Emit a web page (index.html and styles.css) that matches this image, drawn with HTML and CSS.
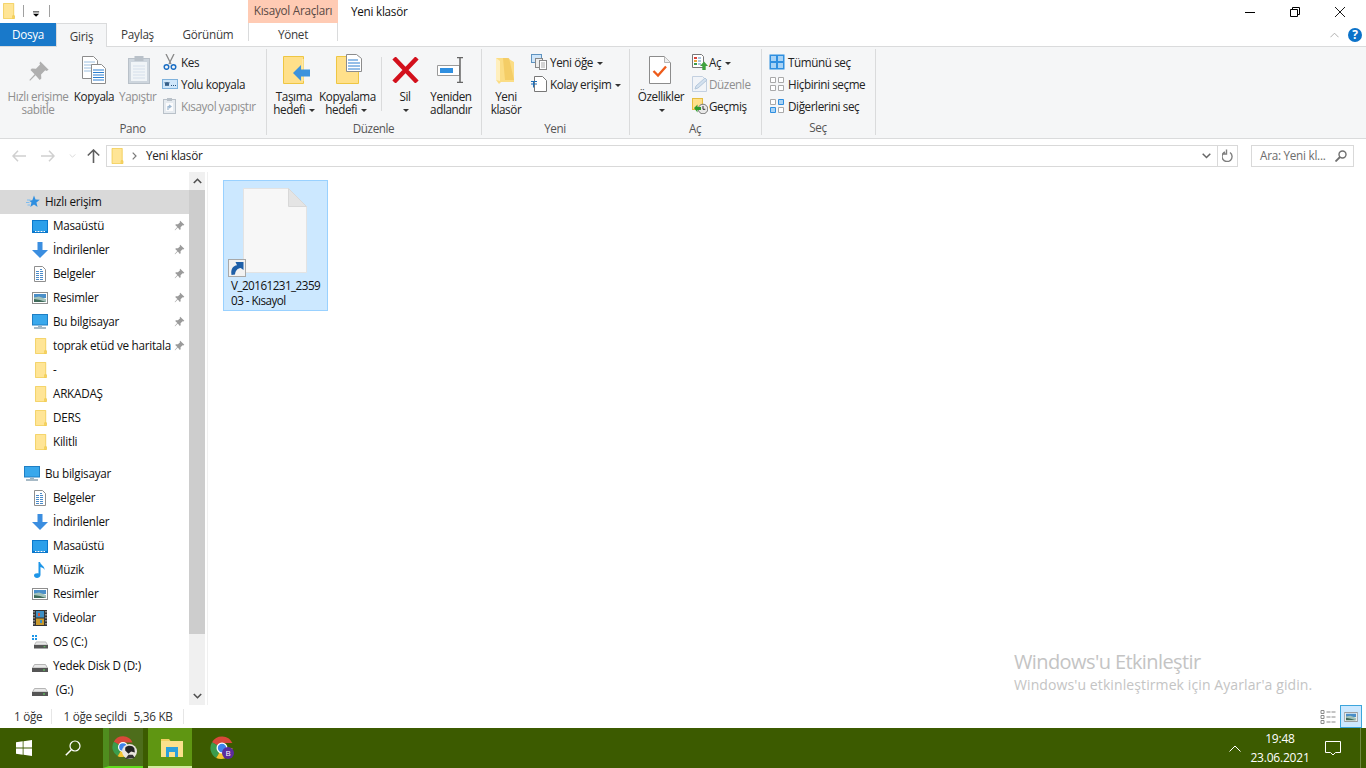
FILE: index.html
```html
<!DOCTYPE html>
<html lang="tr">
<head>
<meta charset="utf-8">
<title>Yeni klasör</title>
<link rel="stylesheet" href="styles.css">
</head>
<body>
<svg class="defs" width="0" height="0" aria-hidden="true">
  <defs>
    <symbol id="folder" viewBox="0 0 16 22">
      <path d="M.5.5h14v17h1v4H.5z" fill="#ffe596" stroke="#eec643"/>
      <path d="M13 21.5v-4h1.500v4z" fill="#ffe596" stroke="#eec643"/>
    </symbol>
    <symbol id="pin" viewBox="0 0 16 16">
      <path d="M9 1l6 6-1.500 1-1-.5-3 3 .2 3-1.200 1L5.500 11 1.500 15 1 14.500 4.800 10.300 1.800 7.300l1-1.200 3 .2 3-3-.5-1z" fill="#8a8a8a"/>
    </symbol>
    <symbol id="desktop" viewBox="0 0 16 13">
      <rect width="16" height="13" fill="#0a78cc"/>
      <rect x="1" y="1" width="14" height="10" fill="#2b9fea"/>
      <path d="M3 11.500h10" stroke="#fff" stroke-dasharray="1 .5"/>
    </symbol>
    <symbol id="down" viewBox="0 0 16 16">
      <path d="M5.500 0h5v8H16l-8 8-8-8h5.500z" fill="#3b8ee0"/>
    </symbol>
    <symbol id="doc" viewBox="0 0 12 16">
      <path d="M.5.500h8l3 3v12H.5z" fill="#fff" stroke="#8f8f8f"/>
      <path d="M6 3.500h2M2 5.500h8M2 7.500h8M2 9.500h8M2 11.500h8M2 13.500h8" stroke="#4b8bc9" stroke-dasharray="3 1"/>
    </symbol>
    <symbol id="pic" viewBox="0 0 16 12">
      <rect x=".5" y=".5" width="15" height="11" fill="#fff" stroke="#8e8e8e"/>
      <rect x="2" y="2" width="12" height="4" fill="#4a8fc9"/>
      <path d="M2 5.500l5-1 7 2.500v3H2z" fill="#a3c2ba"/>
      <path d="M2 7l6 1 6 2H2z" fill="#3f6b5a"/>
    </symbol>
    <symbol id="pc" viewBox="0 0 16 16">
      <rect x=".5" y=".5" width="15" height="10.500" fill="#39a8ec" stroke="#1f7fc4"/>
      <path d="M6 11.500h4V13H6z" fill="#9ab4c6"/>
      <path d="M2 14h12" stroke="#8aa3b3" stroke-width="1.500"/>
    </symbol>
    <symbol id="star" viewBox="0 0 16 16">
      <path d="M10 1.500l1.500 4 4.300.3-3.400 2.800 1.200 4.400-3.600-2.400-3.700 2.400 1.200-4.400-2.300-1.900 3.100-.4z" fill="#2f8fe0"/>
      <path d="M3 6h3.500M2 8.500h3.500M3.500 11H6" stroke="#7dbcf0"/>
    </symbol>
    <symbol id="music" viewBox="0 0 12 16">
      <path d="M4.500 0H6c.5 3 5 4 4.500 8C10 6 8 5.500 6.500 5v8c0 2-2 3-3.500 3S0 15 0 13.500 2 11 4.500 11.500z" fill="#1e96e8"/>
    </symbol>
    <symbol id="film" viewBox="0 0 14 16">
      <rect width="14" height="16" fill="#333"/>
      <path d="M1 1v14M13 1v14" stroke="#ddd" stroke-dasharray="1.500 1.500"/>
      <rect x="3" y="1" width="8" height="6.500" fill="#3d8fc4"/>
      <rect x="3" y="8.500" width="8" height="6.500" fill="#c99a2e"/>
      <path d="M5 3h2v3H5z" fill="#d9553a"/>
      <path d="M7 10h2v3H7z" fill="#3d8fc4"/>
    </symbol>
    <symbol id="drive" viewBox="0 0 16 8">
      <path d="M2.500.5h11l2 3.500H.5z" fill="#e8e8e8" stroke="#b5b5b5"/>
      <rect y="4" width="16" height="4" fill="#555"/>
      <rect x="11" y="5.500" width="2" height="1" fill="#5fe05f"/>
    </symbol>
    <symbol id="chrome" viewBox="0 0 24 24">
      <path d="M12 12L2 6.200A11.500 11.500 0 0 1 22.400 7H12z" fill="#d8483a"/>
      <path d="M12 12l-5.800 10A11.500 11.500 0 0 1 2 6.200z" fill="#3b9c4d"/>
      <path d="M12 12h10.400A11.500 11.500 0 0 1 6.200 22z" fill="#f4c431"/>
      <circle cx="12" cy="12" r="5.500" fill="#fff"/>
      <circle cx="12" cy="12" r="4.200" fill="#3f83ea"/>
    </symbol>
  </defs>
</svg>

<div class="window">
  <header class="titlebar">
    <div class="qat">
      <svg class="ic qf"><use href="#folder"/></svg>
      <i class="qsep"></i>
      <svg class="qdrop" viewBox="0 0 8 8"><path d="M0 1h7" stroke="#000"/><path d="M0 3h7L3.500 6.500z" fill="#000"/></svg>
      <i class="qsep"></i>
    </div>
    <div class="ctx-head">Kısayol Araçları</div>
    <div class="wintitle">Yeni klasör</div>
    <div class="winbtns">
      <svg class="wb wb-min" viewBox="0 0 10 10"><path d="M0 5.500h10" stroke="#000"/></svg>
      <svg class="wb wb-max" viewBox="0 0 10 10"><path d="M.5 2.500h7v7h-7zM2.500 2.500v-2h7v7h-2" fill="none" stroke="#000"/></svg>
      <svg class="wb wb-close" viewBox="0 0 10 10"><path d="M0 0l10 10M10 0L0 10" stroke="#000" stroke-width=".9"/></svg>
    </div>
  </header>

  <nav class="tabs">
    <div class="tab tab-file">Dosya</div>
    <div class="tab tab-home">Giriş</div>
    <div class="tab tab-share">Paylaş</div>
    <div class="tab tab-view">Görünüm</div>
    <div class="tab tab-manage">Yönet</div>
    <div class="tabs-right">
      <svg class="collapse" viewBox="0 0 10 6"><path d="M.5 5.500L5 1l4.500 4.500" fill="none" stroke="#a8a8a8"/></svg>
      <div class="help">?</div>
    </div>
  </nav>

  <section class="ribbon">
    <div class="group g-pano">
      <div class="gbody">
        <div class="lg w-pin dis">
          <svg class="lgi i-pin" viewBox="0 0 16 16"><use href="#pin"/></svg>
          <span>Hızlı erişime<br>sabitle</span>
        </div>
        <div class="lg w-copy">
          <svg class="lgi i-copy" viewBox="0 0 24 28">
            <path d="M.5.500h11l4 4v18H.5z" fill="#fff" stroke="#8c8c8c"/>
            <path d="M2 6h11M2 9h11M2 12h11M2 15h11" stroke="#9cbfe0"/>
            <path d="M9.500 8.500h10l4 4v15h-14z" fill="#fff" stroke="#8c8c8c"/>
            <path d="M11 14h11M11 16.500h11M11 19h11M11 21.500h11M11 24h11" stroke="#2c7fd0"/>
          </svg>
          <span>Kopyala</span>
        </div>
        <div class="lg w-paste dis">
          <svg class="lgi i-paste" viewBox="0 0 22 29">
            <rect x=".5" y="3.500" width="21" height="25" fill="#b8c4d0" stroke="#9aa6b2"/>
            <rect x="3" y="7" width="16" height="19" fill="#eef3f8"/>
            <path d="M5 11h12M5 14h12M5 17h12M5 20h12M5 23h12" stroke="#c5d4e4"/>
            <rect x="6.500" y="1" width="9" height="5" fill="#9aa6b2"/>
          </svg>
          <span>Yapıştır</span>
        </div>
        <div class="smcol">
          <div class="sm">
            <svg class="smi" viewBox="0 0 14 16"><path d="M3 0l5 10M11 0L6 10" stroke="#888" stroke-width="1.300"/><circle cx="3.500" cy="13" r="2.300" fill="none" stroke="#1d6fc4" stroke-width="1.500"/><circle cx="10.500" cy="13" r="2.300" fill="none" stroke="#1d6fc4" stroke-width="1.500"/></svg>
            <span>Kes</span>
          </div>
          <div class="sm">
            <svg class="smi" viewBox="0 0 16 10"><rect x=".5" y=".5" width="15" height="9" fill="#cfe6fa" stroke="#7fb2dc"/><path d="M3 3l1 4 1-4 1 4 1-4M9 6.500h1M11 6.500h1M13 6.500h1" fill="none" stroke="#24507c"/></svg>
            <span>Yolu kopyala</span>
          </div>
          <div class="sm dis">
            <svg class="smi" viewBox="0 0 14 16"><rect x=".5" y="1.500" width="12" height="14" fill="#dfe6ed" stroke="#9aa6b2"/><rect x="4" y="0" width="5" height="3" fill="#9aa6b2"/><rect x="3" y="5" width="7" height="8" fill="#fff"/><path d="M5 12V8.500h3M6 7l2 1.500L6 10" fill="none" stroke="#6f97bf" stroke-width="1.200"/></svg>
            <span>Kısayol yapıştır</span>
          </div>
        </div>
      </div>
      <div class="glabel">Pano</div>
    </div>

    <div class="group g-duzenle">
      <div class="gbody">
        <div class="lg w-move">
          <svg class="lgi i-move" viewBox="0 0 27 28">
            <path d="M.5.500h20v27H.5z" fill="#ffe08a" stroke="#eec643"/>
            <path d="M20 25V3" stroke="#fff3c4"/>
            <path d="M10 17l8-8v4.500h9v7h-9V25z" fill="#3d93dd"/>
          </svg>
          <span>Taşıma<br>hedefi <b class="car"></b></span>
        </div>
        <div class="lg w-copyto">
          <svg class="lgi i-copyto" viewBox="0 0 27 30">
            <path d="M.5 2.500h22v27H.5z" fill="#ffe08a" stroke="#eec643"/>
            <path d="M10.500.500h10l5 4v13h-15z" fill="#fff" stroke="#8c8c8c"/>
            <path d="M12 6h10M12 9h12M12 12h12M12 15h12" stroke="#2c7fd0"/>
          </svg>
          <span>Kopyalama<br>hedefi <b class="car"></b></span>
        </div>
        <i class="isep"></i>
        <div class="lg w-del">
          <svg class="lgi i-del" viewBox="0 0 27 26"><path d="M2 1l23 24M25 1L2 25" stroke="#d3101c" stroke-width="4.500"/></svg>
          <span>Sil<br><b class="car"></b></span>
        </div>
        <div class="lg w-ren">
          <svg class="lgi i-ren" viewBox="0 0 28 26">
            <path d="M.5 8.500h22v10H.5z" fill="#fff" stroke="#9a9a9a"/>
            <rect x="3" y="11" width="13" height="5" fill="#2f8fe0"/>
            <path d="M20 .500h6M20 25.500h6M23 1v24" stroke="#666" stroke-width="1.500"/>
          </svg>
          <span>Yeniden<br>adlandır</span>
        </div>
      </div>
      <div class="glabel">Düzenle</div>
    </div>

    <div class="group g-yeni">
      <div class="gbody">
        <div class="lg w-newf">
          <svg class="lgi i-newf" viewBox="0 0 18 26">
            <path d="M0 0h11l7 4v20H5l-2 2-3-4z" fill="#fbdd85"/>
            <path d="M7 0h6l5 22H9z" fill="#f2c75c" opacity=".75"/>
            <path d="M0 0l4 3v20l-4-1z" fill="#ffefbd"/>
          </svg>
          <span>Yeni<br>klasör</span>
        </div>
        <div class="smcol">
          <div class="sm">
            <svg class="smi" viewBox="0 0 16 16"><rect x=".5" y=".5" width="10" height="8" fill="#cfe6fa" stroke="#5f93c0"/><rect x="4.500" y="4.500" width="7" height="9" fill="#eee" stroke="#888"/><rect x="8.500" y="6.500" width="7" height="9" fill="#fff" stroke="#888"/><path d="M10 9h4M10 11h4M10 13h4" stroke="#aaa"/></svg>
            <span>Yeni öğe <b class="car"></b></span>
          </div>
          <div class="sm">
            <svg class="smi" viewBox="0 0 16 16"><path d="M3.500.500h8l4 4v11h-12z" fill="#fff" stroke="#777"/><path d="M0 5.500h6M0 8h6M2.500 5.500v6" stroke="#1f6fb8"/></svg>
            <span>Kolay erişim <b class="car"></b></span>
          </div>
        </div>
      </div>
      <div class="glabel">Yeni</div>
    </div>

    <div class="group g-ac">
      <div class="gbody">
        <div class="lg w-prop">
          <svg class="lgi i-prop" viewBox="0 0 22 28">
            <path d="M.5.500h15l6 6v21H.5z" fill="#fff" stroke="#8c8c8c"/>
            <path d="M15.500.500v6h6" fill="#eee" stroke="#b5b5b5"/>
            <path d="M4.500 15l4.500 4.500L17 10.500" fill="none" stroke="#ee5b1a" stroke-width="2.300"/>
          </svg>
          <span>Özellikler<br><b class="car"></b></span>
        </div>
        <div class="smcol">
          <div class="sm">
            <svg class="smi" viewBox="0 0 16 16"><path d="M.5.500h9l2 2v11H.5z" fill="#fff" stroke="#777"/><path d="M2 3h3v2H2z" fill="#d9453a"/><path d="M2 6h3v2H2z" fill="#e8a33a"/><path d="M2 9h3v2H2z" fill="#3f9c4d"/><path d="M6 4h3M6 7h3M6 10h3" stroke="#5a8dc0"/><path d="M8 12l4-4.500 4 4.500h-2.300v4h-3.400v-4z" fill="#3fa23f"/></svg>
            <span>Aç <b class="car"></b></span>
          </div>
          <div class="sm dis">
            <svg class="smi" viewBox="0 0 16 16"><path d="M.5.500h10l4 4v11H.5z" fill="#f0f4f9" stroke="#a9bdd4"/><path d="M3 13l1-3 9-8 2 2-9 8z" fill="#c2d6ec" stroke="#90aecd"/></svg>
            <span>Düzenle</span>
          </div>
          <div class="sm">
            <svg class="smi" viewBox="0 0 16 16"><rect x=".5" y=".5" width="10" height="11" fill="#ffe08a" stroke="#e5bd3f"/><circle cx="11" cy="11" r="4.800" fill="#e8e8e8" stroke="#777"/><path d="M11 8v3.300h2.300" fill="none" stroke="#333"/><path d="M2 10l3.500-3.500V9H9v3H5.500v2.500z" fill="#2f9c2f"/></svg>
            <span>Geçmiş</span>
          </div>
        </div>
      </div>
      <div class="glabel">Aç</div>
    </div>

    <div class="group g-sec">
      <div class="gbody">
        <div class="smcol">
          <div class="sm">
            <svg class="smi" viewBox="0 0 16 16"><rect x=".5" y=".5" width="15" height="15" fill="#2f8fe0"/><path d="M2 2h5v5H2zM9 2h5v5H9zM2 9h5v5H2zM9 9h5v5H9z" fill="#a9d3f5"/></svg>
            <span>Tümünü seç</span>
          </div>
          <div class="sm">
            <svg class="smi" viewBox="0 0 16 16"><path d="M1.500 1.500h5v5h-5zM9.500 1.500h5v5h-5zM1.500 9.500h5v5h-5zM9.500 9.500h5v5h-5z" fill="#fff" stroke="#a9a9a9"/></svg>
            <span>Hiçbirini seçme</span>
          </div>
          <div class="sm">
            <svg class="smi" viewBox="0 0 16 16"><path d="M1.500 1.500h5v5h-5zM9.500 9.500h5v5h-5z" fill="#fff" stroke="#a9a9a9"/><path d="M9.500 1.500h5v5h-5zM1.500 9.500h5v5h-5z" fill="#a9d3f5" stroke="#2f8fe0"/></svg>
            <span>Diğerlerini seç</span>
          </div>
        </div>
      </div>
      <div class="glabel">Seç</div>
    </div>
  </section>

  <div class="addrbar">
    <svg class="navb nb-back" viewBox="0 0 14 12"><path d="M6 .7L1 6l5 5.300M1 6h13" fill="none" stroke="#d0d0d0" stroke-width="1.500"/></svg>
    <svg class="navb nb-fwd" viewBox="0 0 14 12"><path d="M8 .7L13 6l-5 5.300M13 6H0" fill="none" stroke="#d0d0d0" stroke-width="1.500"/></svg>
    <svg class="navb nb-drop" viewBox="0 0 8 5"><path d="M.5.500L4 4 7.500.5" fill="none" stroke="#d0d0d0"/></svg>
    <svg class="navb nb-up" viewBox="0 0 13 14"><path d="M.8 6.500L6.500 1l5.700 5.500M6.500 1v13" fill="none" stroke="#5f5f5f" stroke-width="1.600"/></svg>
    <div class="addr">
      <svg class="addr-f"><use href="#folder"/></svg>
      <svg class="addr-c" viewBox="0 0 5 8"><path d="M.7.700L4 4 .7 7.300" fill="none" stroke="#7a7a7a" stroke-width="1.200"/></svg>
      <span class="addr-t">Yeni klasör</span>
      <svg class="addr-d" viewBox="0 0 9 6"><path d="M.7.700L4.500 4.500 8.300.7" fill="none" stroke="#666" stroke-width="1.500"/></svg>
      <div class="addr-r"><svg viewBox="0 0 11 13"><path d="M3 2.500A5 5 0 1 0 8 3M4.500 0v4.500H0" fill="none" stroke="#7f7f7f" stroke-width="1.400" transform="translate(0 .5)"/></svg></div>
    </div>
    <div class="search">
      <span>Ara: Yeni kl...</span>
      <svg viewBox="0 0 12 12"><circle cx="7.500" cy="4.500" r="3.500" fill="none" stroke="#6f6f6f" stroke-width="1.400"/><path d="M5 7l-4.500 4.500" stroke="#6f6f6f" stroke-width="1.800"/></svg>
    </div>
  </div>

  <main class="main">
    <aside class="tree">
      <div class="tree-list">
        <div class="row top sel"><svg class="ti ti-star"><use href="#star"/></svg><span>Hızlı erişim</span></div>
        <div class="row"><svg class="ti ti-desk"><use href="#desktop"/></svg><span>Masaüstü</span><svg class="tpin"><use href="#pin"/></svg></div>
        <div class="row"><svg class="ti ti-down"><use href="#down"/></svg><span>İndirilenler</span><svg class="tpin"><use href="#pin"/></svg></div>
        <div class="row"><svg class="ti ti-doc"><use href="#doc"/></svg><span>Belgeler</span><svg class="tpin"><use href="#pin"/></svg></div>
        <div class="row"><svg class="ti ti-pic"><use href="#pic"/></svg><span>Resimler</span><svg class="tpin"><use href="#pin"/></svg></div>
        <div class="row"><svg class="ti ti-pc"><use href="#pc"/></svg><span>Bu bilgisayar</span><svg class="tpin"><use href="#pin"/></svg></div>
        <div class="row"><svg class="ti ti-fold"><use href="#folder"/></svg><span>toprak etüd ve haritala</span><svg class="tpin"><use href="#pin"/></svg></div>
        <div class="row"><svg class="ti ti-fold"><use href="#folder"/></svg><span>-</span></div>
        <div class="row"><svg class="ti ti-fold"><use href="#folder"/></svg><span>ARKADAŞ</span></div>
        <div class="row"><svg class="ti ti-fold"><use href="#folder"/></svg><span>DERS</span></div>
        <div class="row"><svg class="ti ti-fold"><use href="#folder"/></svg><span>Kilitli</span></div>
      </div>
      <div class="tree-list second">
        <div class="row top"><svg class="ti ti-pc"><use href="#pc"/></svg><span>Bu bilgisayar</span></div>
        <div class="row"><svg class="ti ti-doc"><use href="#doc"/></svg><span>Belgeler</span></div>
        <div class="row"><svg class="ti ti-down"><use href="#down"/></svg><span>İndirilenler</span></div>
        <div class="row"><svg class="ti ti-desk"><use href="#desktop"/></svg><span>Masaüstü</span></div>
        <div class="row"><svg class="ti ti-music"><use href="#music"/></svg><span>Müzik</span></div>
        <div class="row"><svg class="ti ti-pic"><use href="#pic"/></svg><span>Resimler</span></div>
        <div class="row"><svg class="ti ti-film"><use href="#film"/></svg><span>Videolar</span></div>
        <div class="row"><svg class="ti ti-os" viewBox="0 0 16 14"><path d="M0 0h2v2H0zM3 0h2v2H3zM0 3h2v2H0zM3 3h2v2H3z" fill="#1e96e8"/><use href="#drive" x="2" y="6" width="14" height="8"/></svg><span>OS (C:)</span></div>
        <div class="row"><svg class="ti ti-drv"><use href="#drive"/></svg><span>Yedek Disk D (D:)</span></div>
        <div class="row"><svg class="ti ti-drv"><use href="#drive"/></svg><span>&nbsp;(G:)</span></div>
      </div>
    </aside>
    <div class="scroll">
      <svg class="sb-a" viewBox="0 0 9 6"><path d="M.8 5L4.500 1.300 8.200 5" fill="none" stroke="#505050" stroke-width="1.600"/></svg>
      <div class="sb-track"><div class="sb-thumb"></div></div>
      <svg class="sb-a" viewBox="0 0 9 6"><path d="M.8 1l3.700 3.700L8.200 1" fill="none" stroke="#505050" stroke-width="1.600"/></svg>
    </div>
    <div class="content">
      <div class="tile">
        <div class="tile-icon">
          <svg class="tile-doc" viewBox="0 0 64 85">
            <path d="M.5.500h45l18 18v66H.5z" fill="#f7f7f7" stroke="#e3e3e3"/>
            <path d="M45.500.500v18h18z" fill="#e4e4e4" stroke="#d8d8d8"/>
          </svg>
          <svg class="tile-link" viewBox="0 0 18 18">
            <rect x=".5" y=".5" width="17" height="17" fill="#f2f2f2" stroke="#a8a8a8"/>
            <path d="M3.500 16C2.500 10 5 6.800 9 6.300L7.500 3H15.500V11l-2.800-2C9 9.500 7.500 12 7 15.500z" fill="#1e5fa8"/>
          </svg>
        </div>
        <div class="tile-name">V_20161231_2359<br>03 - Kısayol</div>
      </div>
    </div>
  </main>

  <footer class="status">
    <span class="st1">1 öğe</span><i class="stsep"></i>
    <span class="st2">1 öğe seçildi</span><span class="st3">5,36 KB</span><i class="stsep"></i>
    <div class="views">
      <svg class="v-list" viewBox="0 0 16 14"><path d="M.5.500h3v3h-3zM.5 5.500h3v3h-3zM.5 10.500h3v3h-3z" fill="none" stroke="#8a8a8a"/><path d="M6 2h10M6 7h10M6 12h10" stroke="#8a8a8a" stroke-dasharray="4 1"/></svg>
      <div class="v-big"><svg viewBox="0 0 14 10"><use href="#pic" width="14" height="10"/></svg></div>
    </div>
  </footer>

  <div class="taskbar">
    <svg class="t-win" viewBox="0 0 16 16"><path d="M0 2.300L6.700 1.300V7.600H0zM7.500 1.200L16 0V7.600H7.500zM0 8.400H6.700V14.700L0 13.700zM7.500 8.400H16V16L7.500 14.800z" fill="#fff"/></svg>
    <svg class="t-search" viewBox="0 0 16 16"><circle cx="10" cy="6" r="5" fill="none" stroke="#fff" stroke-width="1.200"/><path d="M6.300 9.700L.8 15.200" stroke="#fff" stroke-width="1.500"/></svg>
    <div class="t-btn t-chrome1">
      <svg class="t-ch"><use href="#chrome"/></svg>
      <svg class="t-av" viewBox="0 0 14 14"><circle cx="7" cy="7" r="7" fill="#e9e4de"/><path d="M3 3.500C5 1 10 1 11.500 4L12 8 8.500 7 6 9 3 6z" fill="#222"/><path d="M3 14l3-4h4l2 3z" fill="#333"/></svg>
    </div>
    <div class="t-btn t-exp">
      <svg class="t-ex" viewBox="0 0 22 18"><path d="M0 0h8l1.500 2H22v16H0z" fill="#f2cf62"/><path d="M0 3h22" stroke="#fff2b8"/><path d="M0 4h22v14H0z" fill="#fbe08c"/><path d="M5 8h12v10h-3v-5H8v5H5z" fill="#2a9fdc"/></svg>
    </div>
    <div class="t-btn t-chrome2">
      <svg class="t-ch"><use href="#chrome"/></svg>
      <span class="t-badge">B</span>
    </div>
    <div class="tray">
      <svg class="t-up" viewBox="0 0 12 7"><path d="M.5 6.500L6 1l5.500 5.500" fill="none" stroke="#fff"/></svg>
      <div class="clock"><div>19:48</div><div>23.06.2021</div></div>
      <svg class="t-note" viewBox="0 0 16 15"><path d="M.5.500h15v11h-5L8 14l-2.500-2.500h-5z" fill="none" stroke="#fff"/></svg>
      <i class="t-edge"></i>
    </div>
  </div>

  <div class="watermark">
    <div class="wm1">Windows'u Etkinleştir</div>
    <div class="wm2">Windows'u etkinleştirmek için Ayarlar'a gidin.</div>
  </div>
</div>
</body>
</html>
```

FILE: styles.css
```css
* { box-sizing: border-box; }
html, body { margin: 0; padding: 0; }
body { width: 1366px; height: 768px; overflow: hidden; background: #fff; font: 11.7px/15px "Open Sans", "Liberation Sans", sans-serif; letter-spacing: -.25px; color: #1e1e1e; }
svg { display: block; flex: none; }
.defs { position: absolute; }
i { display: block; flex: none; }
.window { position: relative; width: 1366px; height: 768px; display: flex; flex-direction: column; }

/* title bar */
.titlebar { height: 23px; display: flex; flex: none; }
.qat { width: 248px; display: flex; align-items: flex-start; padding: 3px 0 0 3px; }
.qf { width: 12px; height: 16px; }
.qsep { width: 1px; height: 12px; background: #a0a0a0; margin-top: 2px; }
.qat .qsep:nth-of-type(1) { margin-left: 8px; }
.qdrop { width: 7px; height: 7px; margin: 8px 9px 0 9px; }
.ctx-head { width: 90px; background: #ffcbb4; text-align: center; line-height: 20px; color: #5a4a44; }
.wintitle { margin-left: 13px; line-height: 23px; color: #111; }
.winbtns { margin-left: auto; display: flex; position: relative; width: 122px; height: 23px; align-items: center; justify-content: flex-end; padding: 0 21px 0 0; gap: 35px; }
.wb { width: 10px; height: 10px; }

/* tabs */
.tabs { height: 24px; display: flex; flex: none; position: relative; z-index: 1; }
.tab { height: 24px; line-height: 23px; text-align: center; color: #3a3a3a; }
.tab-file { width: 56px; background: #1979ca; color: #fff; height: 23px; }
.tab-home { width: 51px; background: #f5f6f7; border: 1px solid #dadbdc; border-bottom: 0; line-height: 24px; }
.tab-share { width: 61px; }
.tab-view { width: 80px; }
.tab-manage { width: 90px; border-left: 1px solid #dadbdc; border-right: 1px solid #dadbdc; height: 18px; line-height: 23px; overflow: visible; }
.tabs-right { margin-left: auto; display: flex; align-items: center; gap: 9px; padding: 0 4px 1px 0; }
.collapse { width: 9px; height: 6px; }
.help { width: 14px; height: 14px; border-radius: 50%; background: #0b72c9; color: #fff; font-size: 12px; font-weight: 700; line-height: 14px; text-align: center; letter-spacing: 0; }

/* ribbon */
.ribbon { height: 93px; flex: none; margin-top: -1px; background: #f5f6f7; border-top: 1px solid #dadbdc; border-bottom: 1px solid #dadbdc; display: flex; padding-top: 2px; letter-spacing: -.4px; }
.group { border-right: 1px solid #dadbdc; height: 86px; display: flex; flex-direction: column; flex: none; }
.gbody { height: 72px; display: flex; align-items: flex-start; }
.glabel { text-align: center; color: #555; line-height: 15px; margin-left: -1px; }
.g-pano { width: 267px; }
.g-pano .gbody { padding-left: 7px; }
.g-duzenle { width: 215px; }
.g-duzenle .gbody { padding-left: 3px; }
.g-yeni { width: 148px; }
.g-yeni .gbody { padding-left: 3px; }
.g-ac { width: 132px; }
.g-ac .gbody { padding-left: 3px; }
.g-sec { width: 114px; }
.g-sec .gbody { padding-left: 7px; }
.lg { text-align: center; flex: none; line-height: 13px; color: #222; padding-top: 8px; height: 72px; position: relative; white-space: nowrap; }
.lg span { position: absolute; top: 41px; left: 0; right: 0; }
.lgi { position: absolute; }
.dis, .dis span { color: #8f8f8f; }
.dis svg { opacity: .65; }
.car { display: inline-block; width: 0; height: 0; border: 3px solid transparent; border-top: 3px solid #333; border-bottom: 0; vertical-align: middle; margin-left: 1px; }
.w-pin { width: 62px; }
.w-copy { width: 50px; }
.w-paste { width: 36px; }
.w-move { width: 46px; margin-left: 1px; }
.w-copyto { width: 54px; margin-left: 2px; }
.isep { width: 1px; height: 54px; background: #dadbdc; margin: 8px 0 0 8px; }
.w-del { width: 46px; }
.w-ren { width: 46px; }
.w-newf { width: 42px; }
.w-prop { width: 54px; margin-left: 1px; }
.i-pin { left: 21px; top: 11px; width: 22px; height: 22px; }
.i-copy { left: 13px; top: 7px; width: 24px; height: 28px; }
.i-paste { left: 9px; top: 6px; width: 22px; height: 29px; }
.i-move { left: 12px; top: 7px; width: 27px; height: 28px; }
.i-copyto { left: 17px; top: 5px; width: 27px; height: 30px; }
.i-del { left: 10px; top: 8px; width: 27px; height: 26px; }
.i-ren { left: 9px; top: 8px; width: 28px; height: 26px; }
.i-newf { left: 11px; top: 9px; width: 18px; height: 26px; }
.i-prop { left: 15px; top: 7px; width: 22px; height: 28px; }
.smcol { display: flex; flex-direction: column; padding-top: 2px; }
.sm { height: 22px; display: flex; align-items: center; gap: 3px; white-space: nowrap; color: #222; }
.smi { width: 16px; height: 16px; }
.g-pano .smcol { margin-left: 7px; }
.g-yeni .smcol { margin-left: 4px; }
.g-ac .smcol { margin-left: 4px; }
.g-ac .sm { gap: 1px; }

/* address bar */
.addrbar { height: 33px; flex: none; display: flex; align-items: center; padding: 0 12px 0 12px; }
.navb { flex: none; }
.nb-back { width: 14px; height: 12px; }
.nb-fwd { width: 14px; height: 12px; margin-left: 15px; }
.nb-drop { width: 7px; height: 4px; margin-left: 14px; }
.nb-up { width: 13px; height: 14px; margin-left: 11px; }
.addr { width: 1132px; height: 22px; margin-left: 6px; border: 1px solid #d9d9d9; display: flex; align-items: center; padding-left: 4px; }
.addr-f { width: 13px; height: 16px; }
.addr-c { width: 5px; height: 8px; margin-left: 8px; }
.addr-t { margin-left: 9px; color: #222; }
.addr-d { width: 9px; height: 6px; margin-left: auto; margin-right: 6px; }
.addr-r { width: 20px; height: 20px; border-left: 1px solid #d9d9d9; display: flex; align-items: center; justify-content: center; }
.addr-r svg { width: 11px; height: 13px; }
.search { width: 103px; height: 22px; margin-left: 13px; border: 1px solid #d9d9d9; display: flex; align-items: center; justify-content: space-between; padding: 0 6px 0 8px; color: #6d6d6d; }
.search svg { width: 12px; height: 12px; }

/* main */
.main { height: 533px; flex: none; display: flex; }
.tree { width: 189px; padding-top: 18px; flex: none; overflow: hidden; }
.second { margin-top: 8px; }
.row { height: 24px; display: flex; align-items: center; padding-left: 32px; position: relative; white-space: nowrap; color: #111; }
.row.top { padding-left: 24px; }
.row.sel { background: #d9d9d9; }
.row span { margin-left: 5px; margin-bottom: 2px; }
.ti { width: 16px; height: 16px; }
.ti-desk { height: 13px; }
.ti-doc { width: 12px; margin: 0 2px; }
.ti-pic { height: 12px; }
.ti-music { width: 12px; margin: 0 2px; }
.ti-film { width: 14px; margin: 0 1px; }
.ti-fold { width: 14px; height: 16px; margin-left: 2px; margin-right: 0; }
.ti-drv { height: 8px; margin-top: 4px; }
.ti-os { height: 14px; }
.tpin { position: absolute; left: 174px; top: 6px; width: 11px; height: 11px; opacity: .85; }
.scroll { width: 16px; flex: none; background: #f0f0f0; display: flex; flex-direction: column; }
.sb-a { width: 9px; height: 6px; margin: 6px auto; }
.sb-track { flex: 1; }
.sb-thumb { height: 444px; background: #cdcdcd; }
.content { flex: 1; border-left: 1px solid #f0f0f0; margin-left: 2px; padding: 8px 0 0 15px; }
.tile { width: 105px; height: 131px; background: #cce8ff; border: 1px solid #99d1ff; }
.tile-icon { height: 99px; position: relative; }
.tile-doc { position: absolute; left: 19px; top: 7px; width: 64px; height: 85px; }
.tile-link { position: absolute; left: 4px; top: 78px; width: 18px; height: 18px; }
.tile-name { padding-left: 7px; line-height: 15px; margin-top: -2px; color: #111; letter-spacing: -.55px; }

/* status */
.status { height: 23px; flex: none; display: flex; align-items: center; padding-left: 14px; color: #333; }
.stsep { width: 1px; height: 15px; background: #e6e6e6; }
.st1 { margin-right: 9px; }
.st2 { margin-left: 11px; margin-right: 7px; }
.st3 { margin-right: 10px; }
.views { margin-left: auto; display: flex; align-items: flex-end; height: 23px; padding-right: 4px; gap: 3px; }
.v-list { width: 17px; height: 14px; margin-bottom: 4px; }
.v-big { width: 22px; height: 23px; margin-top: -1px; background: #cce8ff; border: 1px solid #3ca5dc; display: flex; align-items: center; justify-content: center; }
.v-big svg { width: 14px; height: 10px; }

/* taskbar */
.taskbar { height: 40px; flex: none; background: #3c5b00; display: flex; align-items: center; color: #fff; letter-spacing: -.2px; }
.t-win { width: 16px; height: 16px; margin-left: 16px; }
.t-search { width: 16px; height: 16px; margin-left: 33px; }
.t-btn { height: 40px; position: relative; flex: none; }
.t-chrome1 { width: 40px; margin-left: 22px; background: #4d6d1b; border-bottom: 2px solid #62dc1e; border-left: 6px solid #4f8d1e; }
.t-chrome1 .t-ch { position: absolute; left: 3px; top: 8px; width: 22px; height: 22px; }
.t-av { position: absolute; left: 13px; top: 16px; width: 15px; height: 15px; }
.t-exp { width: 44px; margin-left: 5px; background: #5f9612; border-bottom: 2px solid #d0eda0; }
.t-ex { position: absolute; left: 13px; top: 11px; width: 22px; height: 18px; }
.t-chrome2 { width: 40px; margin-left: 9px; }
.t-chrome2 .t-ch { position: absolute; left: 9px; top: 8px; width: 24px; height: 24px; }
.t-badge { position: absolute; left: 21px; top: 19px; width: 12px; height: 12px; border-radius: 50%; background: #5b2d9c; color: #fff; font-size: 8px; line-height: 12px; text-align: center; letter-spacing: 0; }
.tray { margin-left: auto; display: flex; align-items: center; height: 40px; }
.t-up { width: 12px; height: 7px; margin-right: 8px; }
.clock { width: 62px; text-align: center; line-height: 19px; font-size: 12px; }
.t-note { width: 16px; height: 15px; margin-left: 14px; margin-right: 25px; }
.t-edge { width: 1px; height: 40px; background: #6f8a40; position: absolute; right: 5px; }

/* activation watermark */
.watermark { position: absolute; left: 1014px; top: 650px; color: #c4c4c4; }
.wm1 { font-size: 20px; line-height: 24px; letter-spacing: -.6px; }
.wm2 { font-size: 14px; line-height: 21px; letter-spacing: .1px; }
```
